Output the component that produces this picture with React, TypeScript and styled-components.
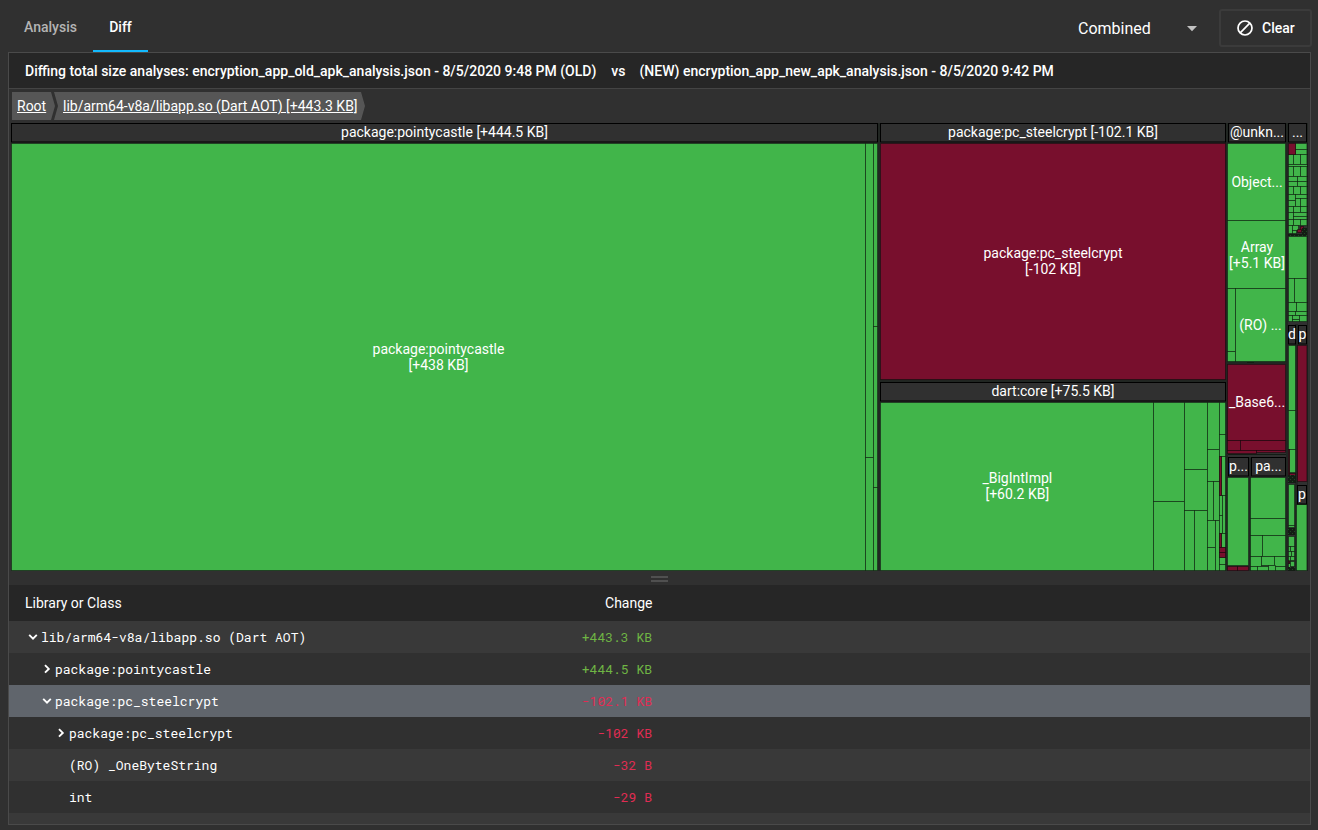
import React from 'react';
import styled, { createGlobalStyle } from 'styled-components';

const GREEN = '#41b54a';
const RED = '#780f2d';

const GlobalStyle = createGlobalStyle`
  * { box-sizing: border-box; }
  body {
    margin: 0;
    background: #303030;
    color: #fff;
    font: 14px/16px Roboto, sans-serif;
    overflow: hidden;
  }
`;

const Page = styled.div`
  display: flex;
  flex-direction: column;
  width: 1318px;
  height: 830px;
  padding: 0 7px 5px 8px;
`;

const Toolbar = styled.header`
  display: flex;
  justify-content: space-between;
  height: 52px;
  flex: none;
`;

const Tabs = styled.nav`
  display: flex;
`;

const Tab = styled.div<{ $active?: boolean; $width: number }>`
  display: flex;
  justify-content: center;
  width: ${p => p.$width}px;
  padding-top: 19px;
  font-weight: 500;
  color: ${p => (p.$active ? '#fff' : '#b4b4b4')};
  border-bottom: 2px solid ${p => (p.$active ? '#13b9fd' : 'transparent')};
`;

const Actions = styled.div`
  display: flex;
  padding-top: 9px;
  margin-right: -1px;
`;

const Select = styled.div`
  display: flex;
  align-items: center;
  justify-content: space-between;
  width: 120px;
  height: 38px;
  padding-top: 1px;
  margin-right: 21px;
  font-size: 16px;
`;

const ClearButton = styled.div`
  display: flex;
  align-items: center;
  gap: 9px;
  width: 93px;
  height: 38px;
  padding-left: 16px;
  border: 2px solid #3b3b3b;
  border-radius: 3px;
  font-weight: 500;
`;

const Panel = styled.main`
  display: flex;
  flex-direction: column;
  flex: 1;
  min-height: 0;
  overflow: hidden;
  border: 1px solid #4a4a4a;
`;

const DiffTitle = styled.div`
  display: flex;
  align-items: center;
  height: 36px;
  flex: none;
  padding: 0 16px;
  background: #262626;
  border-bottom: 1px solid #444;
  font-weight: 500;
  white-space: pre;
`;

const Versus = styled.span`
  margin: 0 14px 0 15px;
`;

const Breadcrumbs = styled.div`
  display: flex;
  height: 33px;
  flex: none;
  padding: 3px 0 0 3px;
`;

const Crumb = styled.span<{ $width: number; $first?: boolean }>`
  display: flex;
  align-items: center;
  width: ${p => p.$width}px;
  height: 28px;
  padding-left: ${p => (p.$first ? 5 : 9)}px;
  margin-right: -1px;
  background: #565656;
  clip-path: polygon(0 0, calc(100% - 4px) 0, 100% 50%, calc(100% - 4px) 100%, 0 100%, ${p => (p.$first ? 0 : 4)}px 50%);
  text-decoration: underline;
  white-space: nowrap;
`;

const Treemap = styled.svg`
  display: block;
  flex: none;
  width: 1301px;
  height: 450px;
`;

const Splitter = styled.div`
  display: flex;
  flex-direction: column;
  align-items: center;
  gap: 2px;
  height: 13px;
  flex: none;
  padding-top: 4px;
`;

const Grip = styled.i`
  width: 17px;
  height: 2px;
  background: #505050;
`;

const TableHead = styled.div`
  display: flex;
  align-items: center;
  height: 36px;
  flex: none;
  padding-left: 16px;
  background: #262626;
`;

const HeadCell = styled.span<{ $width: number; $end?: boolean }>`
  width: ${p => p.$width}px;
  text-align: ${p => (p.$end ? 'right' : 'left')};
`;

const Row = styled.div<{ $tone: string; $level: number }>`
  display: flex;
  align-items: center;
  height: 32px;
  flex: none;
  padding: 0 0 1px ${p => 16 + p.$level * 14}px;
  background: ${p => p.$tone};
  font: 13px/16px 'Roboto Mono', 'DejaVu Sans Mono', monospace;
`;

const Toggle = styled.span`
  display: flex;
  width: 16px;
  justify-content: center;
`;

const Name = styled.span<{ $level: number }>`
  width: ${p => 481 - p.$level * 14}px;
  white-space: pre;
`;

const Change = styled.span<{ $up: boolean }>`
  width: 130px;
  text-align: right;
  color: ${p => (p.$up ? '#6fb544' : '#e12c53')};
`;

const Chevron = ({ open }: { open?: boolean }) => (
  <svg width="10" height="10" viewBox="0 0 10 10" fill="none" stroke="#fff" strokeWidth="1.9">
    <path d={open ? 'M1.2 2.9L5 6.7L8.8 2.9' : 'M3 1.1L6.8 4.9L3 8.7'} />
  </svg>
);

type Box = [x: number, y: number, right: number, bottom: number];

// Leaf cells as left, top, right, bottom edges.
const greenCells: Box[] = [
  [11, 143, 865.5, 571],
  [865.5, 143, 873.5, 457], [865.5, 457, 873.5, 571],
  [873.5, 143, 878, 326], [873.5, 326, 878, 487], [873.5, 487, 878, 571],
  [880, 402, 1154, 571],
  [1154, 402, 1185, 501], [1154, 501, 1185, 571],
  [1185, 402, 1208, 469.5], [1185, 469.5, 1208, 510.5],
  [1185, 510.5, 1195, 571], [1195, 510.5, 1208, 571],
  [1208, 402, 1220, 449], [1208, 449, 1220, 481.5],
  [1208, 481.5, 1213.5, 520.5], [1213.5, 481.5, 1220, 520.5],
  [1208, 520.5, 1215.5, 547.5], [1208, 547.5, 1215.5, 571], [1215.5, 520.5, 1220, 571],
  [1220, 402, 1225, 434.5], [1220, 434.5, 1225, 456],
  [1222, 456, 1225, 495], [1220, 495, 1222.5, 515], [1222.5, 495, 1225, 533],
  [1220, 515, 1222.5, 533], [1222, 533, 1225, 547], [1220, 557.5, 1225, 564], [1220, 564, 1225, 571],
  [1228, 143, 1286, 220.5], [1228, 220.5, 1286, 288.5],
  [1228, 288.5, 1235.5, 351], [1228, 351, 1235.5, 361], [1235.5, 288.5, 1286, 361],
  [1228, 477, 1249, 565],
  [1251, 477, 1286, 518.5], [1251, 518.5, 1286, 535.5],
  [1251, 535.5, 1263, 556], [1263, 535.5, 1286, 556],
  [1251, 556, 1261.5, 566], [1261.5, 556, 1274.5, 565], [1274.5, 556, 1286, 566],
  [1251, 566, 1258, 571], [1258, 566, 1269, 571], [1269, 565, 1276, 571], [1276, 566, 1286, 571],
  [1296, 143, 1307, 149.5], [1296, 149.5, 1307, 154.5],
  [1288, 154.5, 1294, 164], [1294, 154.5, 1301, 164], [1301, 154.5, 1307, 164],
  [1288, 164, 1307, 166.5],
  [1288, 166.5, 1294, 176.5], [1294, 166.5, 1301, 176.5], [1301, 166.5, 1307, 176.5],
  [1288, 176.5, 1297.5, 181.5], [1297.5, 176.5, 1307, 181.5],
  [1288, 181.5, 1297.5, 186.5], [1297.5, 181.5, 1307, 186.5],
  [1288, 186.5, 1294, 194.5], [1294, 186.5, 1301, 194.5], [1301, 186.5, 1307, 194.5],
  [1288, 194.5, 1296, 200.5], [1288, 200.5, 1296, 206.5],
  [1296, 194.5, 1307, 198.5], [1296, 198.5, 1301, 206.5], [1301, 198.5, 1307, 206.5],
  [1288, 206.5, 1294, 212.5], [1294, 206.5, 1301, 212.5], [1301, 206.5, 1307, 212.5],
  [1288, 212.5, 1294, 219.5], [1294, 212.5, 1307, 216], [1294, 216, 1307, 219.5],
  [1288, 219.5, 1294, 225.5], [1294, 219.5, 1301, 225.5], [1301, 219.5, 1307, 225.5],
  [1288, 225.5, 1292.5, 233], [1292.5, 225.5, 1299, 230], [1292.5, 230, 1297, 233],
  [1288, 236, 1307, 278.5], [1288, 278.5, 1294.5, 302.5], [1294.5, 278.5, 1307, 302.5],
  [1288, 302.5, 1297, 311], [1297, 302.5, 1307, 311],
  [1288, 311, 1295.5, 315.5], [1295.5, 311, 1307, 315.5],
  [1288, 315.5, 1293, 321.5], [1293, 315.5, 1300, 319], [1293, 319, 1300, 321.5], [1300, 315.5, 1307, 321.5],
  [1288, 345, 1296, 410.5], [1288, 410.5, 1296, 449.5], [1290, 449.5, 1296, 472],
  [1288, 484, 1295, 525], [1288, 525, 1295, 527.5],
  [1288, 536, 1295, 546.5], [1288, 546.5, 1291, 551], [1291, 546.5, 1295, 551],
  [1288, 551, 1292, 556], [1292, 551, 1295, 556], [1288, 556, 1291, 561], [1291, 556, 1295, 560],
  [1288, 563, 1291, 567], [1291, 561, 1295, 566],
  [1297, 504, 1307, 571],
];

const redCells: Box[] = [
  [880, 143, 1225, 379],
  [1220, 456, 1222, 495], [1220, 533, 1222, 547], [1220, 547, 1225, 552.5], [1220, 552.5, 1225, 557.5],
  [1228, 364, 1286, 440.5],
  [1228, 440.5, 1241, 450.5], [1241, 440.5, 1286, 450.5],
  [1228, 450.5, 1257, 453.5], [1257, 450.5, 1286, 452.5],
  [1228, 566, 1238, 571], [1238, 566, 1249, 571],
  [1288, 143, 1296, 154.5], [1301, 226, 1304, 230], [1298, 229.5, 1302, 232],
  [1288, 449.5, 1290, 480], [1290, 473, 1296, 475],
  [1298, 345, 1307, 481.5],
  [1288, 560.5, 1290, 563.5],
];

// Clusters of cells too small to be resolved.
const denseAreas: Box[] = [
  [1302, 228, 1307, 236], [1288, 234, 1307, 236],
  [1247, 362, 1254, 363], [1228, 454, 1286, 455],
  [1288, 475, 1296, 483], [1288, 528, 1295, 535], [1288, 567, 1295, 571],
];

const sections: { box: Box; label: string }[] = [
  { box: [11, 123, 878, 142], label: 'package:pointycastle [+444.5 KB]' },
  { box: [880, 123, 1226, 142], label: 'package:pc_steelcrypt [-102.1 KB]' },
  { box: [880, 382, 1226, 401], label: 'dart:core [+75.5 KB]' },
  { box: [1228, 123, 1286, 142], label: '@unkn...' },
  { box: [1288, 123, 1307, 142], label: '...' },
  { box: [1228, 457, 1249, 476], label: 'p...' },
  { box: [1251, 457, 1286, 476], label: 'pa...' },
  { box: [1288, 325, 1296, 344], label: 'd' },
  { box: [1298, 325, 1307, 344], label: 'p' },
  { box: [1297, 485, 1307, 504], label: 'p' },
];

const labels: [x: number, y: number, text: string][] = [
  [438.5, 354, 'package:pointycastle'], [438.5, 370, '[+438 KB]'],
  [1053, 258, 'package:pc_steelcrypt'], [1053, 274, '[-102 KB]'],
  [1017.3, 483, '_BigIntImpl'], [1017.3, 499, '[+60.2 KB]'],
  [1257, 187, 'Object...'],
  [1257, 252, 'Array'], [1257, 268, '[+5.1 KB]'],
  [1260.5, 330, '(RO) ...'], [1257, 407, '_Base6...'],
];

// Cell edges are snapped so that every outline falls on whole pixels;
// the outer edges of a section line up with its header.
const outerEdges = [11, 880, 1225, 1288, 1307];
const snapX = (x: number) => (outerEdges.includes(x) ? x + (x === 1307 ? -0.1 : 0.5) : Math.ceil(x) - 0.5);
const snapY = (y: number) => Math.min(Math.floor(y) + 0.5, 570.5);

const Cells = ({ boxes, fill }: { boxes: Box[]; fill: string }) => (
  <g fill={fill} stroke="#000" strokeOpacity=".42">
    {boxes.map(([x, y, r, b], i) => (
      <rect key={i} x={snapX(x)} y={snapY(y)} width={snapX(r) - snapX(x)} height={snapY(b) - snapY(y)} />
    ))}
  </g>
);

const SizeTreemap = () => (
  <Treemap viewBox="9 122 1301 450">
    <defs>
      <pattern id="dense" width="4" height="4" patternUnits="userSpaceOnUse">
        <path fill="#131d14" d="M0 0h4v4H0z" />
        <path fill="#1d4a21" d="M0 1h1v1H0zM2 3h1v1H2z" />
      </pattern>
    </defs>
    <path fill="#212622" d="M878 123h2v448h-2zM1225 123h3v448h-3zM1286 123h2v448h-2zM1307 123h1v448h-1zM1249 457h2v114h-2zM1295 324h3v247h-3zM880 379h345v3H880zM1228 361h58v3h-58z" />
    <Cells boxes={greenCells} fill={GREEN} />
    <Cells boxes={redCells} fill={RED} />
    {denseAreas.map(([x, y, r, b], i) => (
      <rect key={i} x={x} y={y} width={r - x} height={b - y} fill="url(#dense)" />
    ))}
    <g fill="#303030" stroke="#000">
      {sections.map(({ box: [x, y, r, b] }, i) => (
        <rect key={i} x={x + 0.5} y={y + 0.5} width={r - x - 1} height={b - y - 0.5} />
      ))}
    </g>
    <g fill="#fff" fontFamily="Roboto, sans-serif" fontSize="14" textAnchor="middle">
      {sections.map(({ box: [x, , r, b], label }, i) => (
        <text key={i} x={(x + r) / 2} y={b - 5}>{label}</text>
      ))}
      {labels.map(([x, y, text]) => (
        <text key={text} x={x} y={y}>{text}</text>
      ))}
    </g>
  </Treemap>
);

const rows: { name: string; change: string; level: number; tone: string; open?: boolean }[] = [
  { name: 'lib/arm64-v8a/libapp.so (Dart AOT)', change: '+443.3 KB', level: 0, tone: '#393939', open: true },
  { name: 'package:pointycastle', change: '+444.5 KB', level: 1, tone: '#303030', open: false },
  { name: 'package:pc_steelcrypt', change: '-102.1 KB', level: 1, tone: '#60656c', open: true },
  { name: 'package:pc_steelcrypt', change: '-102 KB', level: 2, tone: '#303030', open: false },
  { name: '(RO) _OneByteString', change: '-32 B', level: 2, tone: '#393939' },
  { name: 'int', change: '-29 B', level: 2, tone: '#303030' },
  { name: '', change: '', level: 0, tone: '#393939' },
];

export default function App() {
  return (
    <>
      <GlobalStyle />
      <Page>
        <Toolbar>
          <Tabs>
            <Tab $width={85}>Analysis</Tab>
            <Tab $width={55} $active>Diff</Tab>
          </Tabs>
          <Actions>
            <Select>
              Combined
              <svg width="12" height="6" viewBox="0 0 12 6"><path d="M1 0h10L6 5.2z" fill="#c1c1c1" /></svg>
            </Select>
            <ClearButton>
              <svg width="16" height="16" viewBox="0 0 16 16" fill="none" stroke="#fff" strokeWidth="1.7">
                <circle cx="8" cy="8" r="7" />
                <path d="M3.2 12.8L12.8 3.2" />
              </svg>
              Clear
            </ClearButton>
          </Actions>
        </Toolbar>
        <Panel>
          <DiffTitle>
            Diffing total size analyses: encryption_app_old_apk_analysis.json - 8/5/2020 9:48 PM (OLD)
            <Versus>vs</Versus>
            (NEW) encryption_app_new_apk_analysis.json - 8/5/2020 9:42 PM
          </DiffTitle>
          <Breadcrumbs>
            <Crumb $width={43} $first>Root</Crumb>
            <Crumb $width={311}>lib/arm64-v8a/libapp.so (Dart AOT) [+443.3 KB]</Crumb>
          </Breadcrumbs>
          <SizeTreemap />
          <Splitter><Grip /><Grip /></Splitter>
          <TableHead>
            <HeadCell $width={497}>Library or Class</HeadCell>
            <HeadCell $width={130.5} $end>Change</HeadCell>
          </TableHead>
          {rows.map((row, i) => (
            <Row key={i} $tone={row.tone} $level={row.level}>
              <Toggle>{row.open !== undefined && <Chevron open={row.open} />}</Toggle>
              <Name $level={row.level}>{row.name}</Name>
              <Change $up={row.change.startsWith('+')}>{row.change}</Change>
            </Row>
          ))}
        </Panel>
      </Page>
    </>
  );
}
